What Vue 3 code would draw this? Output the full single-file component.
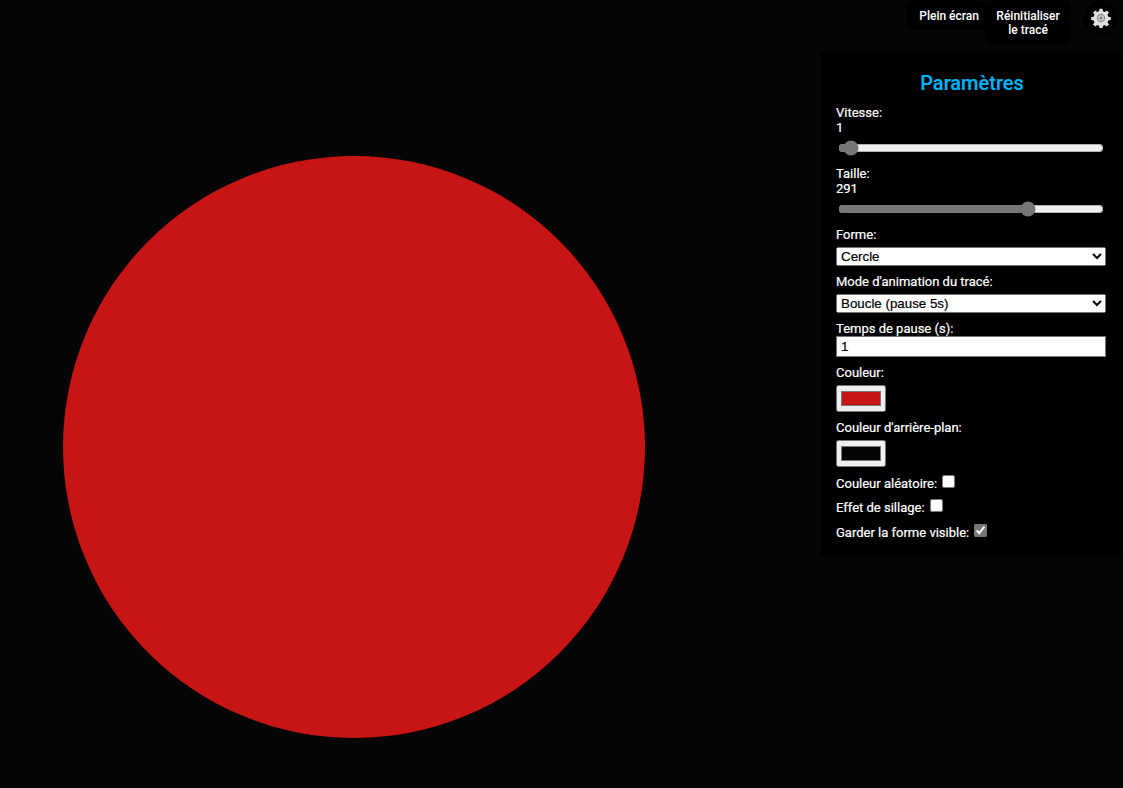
<template>
  <div class="page">
    <svg class="stage" width="1123" height="788" viewBox="0 0 1123 788">
      <circle cx="354" cy="447" :r="size" :fill="color" />
    </svg>

    <div class="top-buttons">
      <button class="top-btn">Plein écran</button>
      <button class="top-btn reset">Réinitialiser<br />le tracé</button>
      <button class="gear-btn" aria-label="Paramètres">
        <svg width="20" height="20" viewBox="0 0 24 24">
          <path
            fill="#e0e0e0"
            fill-rule="evenodd"
            d="M10.2 1h3.6l.5 3a8.2 8.2 0 0 1 2.2.9l2.5-1.8 2.6 2.6-1.8 2.5c.4.7.7 1.4.9 2.2l3 .5v3.6l-3 .5a8.2 8.2 0 0 1-.9 2.2l1.8 2.5-2.6 2.6-2.5-1.8a8.2 8.2 0 0 1-2.2.9l-.5 3h-3.6l-.5-3a8.2 8.2 0 0 1-2.2-.9l-2.5 1.8-2.6-2.6 1.8-2.5a8.2 8.2 0 0 1-.9-2.2l-3-.5v-3.6l3-.5c.2-.8.5-1.5.9-2.2L2.4 5.7 5 3.1l2.5 1.8A8.2 8.2 0 0 1 9.7 4z"
          />
          <circle cx="12" cy="12" r="5" fill="#8a8a8a" />
          <circle cx="12" cy="12" r="3.6" fill="#d0d0d0" />
          <circle cx="12" cy="12" r="1.8" fill="#777" />
        </svg>
      </button>
    </div>

    <div class="panel">
      <h2>Paramètres</h2>

      <label class="field">Vitesse:<br />{{ speed }}</label>
      <input v-model.number="speed" class="slider" type="range" min="0" max="50" />

      <label class="field">Taille:<br />{{ size }}</label>
      <input v-model.number="size" class="slider" type="range" min="1" max="400" />

      <label class="field">Forme:</label>
      <select v-model="shape" class="select">
        <option>Cercle</option>
        <option>Carré</option>
        <option>Triangle</option>
      </select>

      <label class="field">Mode d'animation du tracé:</label>
      <select v-model="mode" class="select">
        <option>Boucle (pause 5s)</option>
        <option>Une seule fois</option>
      </select>

      <label class="field">Temps de pause (s):</label>
      <input v-model="pause" class="text-input" type="number" />

      <label class="field">Couleur:</label>
      <input v-model="color" class="color" type="color" />

      <label class="field">Couleur d'arrière-plan:</label>
      <input v-model="background" class="color" type="color" />

      <label class="check">Couleur aléatoire: <input v-model="randomColor" type="checkbox" /></label>
      <label class="check">Effet de sillage: <input v-model="trail" type="checkbox" /></label>
      <label class="check">Garder la forme visible: <input v-model="keepVisible" type="checkbox" /></label>
    </div>
  </div>
</template>

<script setup>
import { ref } from 'vue'

const speed = ref(1)
const size = ref(291)
const shape = ref('Cercle')
const mode = ref('Boucle (pause 5s)')
const pause = ref(1)
const color = ref('#c71414')
const background = ref('#050505')
const randomColor = ref(false)
const trail = ref(false)
const keepVisible = ref(true)
</script>

<style>
html,
body {
  margin: 0;
  background: #050505;
}
</style>

<style scoped>
.page {
  position: relative;
  width: 1123px;
  height: 788px;
  overflow: hidden;
  background: #050505;
  font-family: Roboto, "Liberation Sans", sans-serif;
  font-size: 13px;
  color: #fff;
}

.stage {
  position: absolute;
  inset: 0;
}

.top-buttons {
  position: absolute;
  top: 1px;
  right: 5px;
  display: flex;
  align-items: flex-start;
}

.top-btn {
  margin: 0;
  padding: 8px 6px 7px 12px;
  border: none;
  border-radius: 5px;
  background: #000;
  color: #fff;
  font: inherit;
  font-size: 12px;
  font-weight: 500;
  line-height: 14px;
  text-align: center;
}

.reset {
  width: 86px;
  padding: 8px 6px 7px;
}

.gear-btn {
  display: flex;
  align-items: center;
  justify-content: center;
  width: 34px;
  height: 34px;
  margin-left: 13px;
  padding: 0;
  border: none;
  border-radius: 50%;
  background: #000;
}

.panel {
  position: absolute;
  top: 51px;
  right: 0;
  box-sizing: border-box;
  width: 302px;
  height: 506px;
  padding: 20px 15px;
  border-radius: 5px;
  background: #000;
  -webkit-text-stroke: 0.2px;
}

h2 {
  margin: 0 0 10px;
  color: #00b4f5;
  font-size: 20px;
  font-weight: 500;
  line-height: 24px;
  text-align: center;
}

.field {
  display: block;
  line-height: 15px;
}

.slider {
  display: block;
  width: 266px;
  height: 16px;
  margin: 5px 0 10px 2px;
  accent-color: #767676;
}

.select {
  display: block;
  box-sizing: border-box;
  width: 270px;
  height: 19px;
  margin: 5px 0 8px;
  font-family: "Liberation Sans", Arial, sans-serif;
  font-size: 13.33px;
}

.text-input {
  display: block;
  box-sizing: border-box;
  width: 270px;
  height: 21px;
  margin: 0 0 7.5px;
  padding: 1px 4px;
  border: 1px solid #767676;
  font-family: "Liberation Sans", Arial, sans-serif;
  font-size: 13.33px;
}

.color {
  display: block;
  box-sizing: border-box;
  width: 50px;
  height: 27px;
  margin: 5px 0 8px;
}

.check {
  display: block;
  height: 24.5px;
  line-height: 15px;
}

.check:first-of-type {
  margin-top: -1px;
}

.check input {
  margin: 0 0 0 2px;
  accent-color: #767676;
}
</style>
